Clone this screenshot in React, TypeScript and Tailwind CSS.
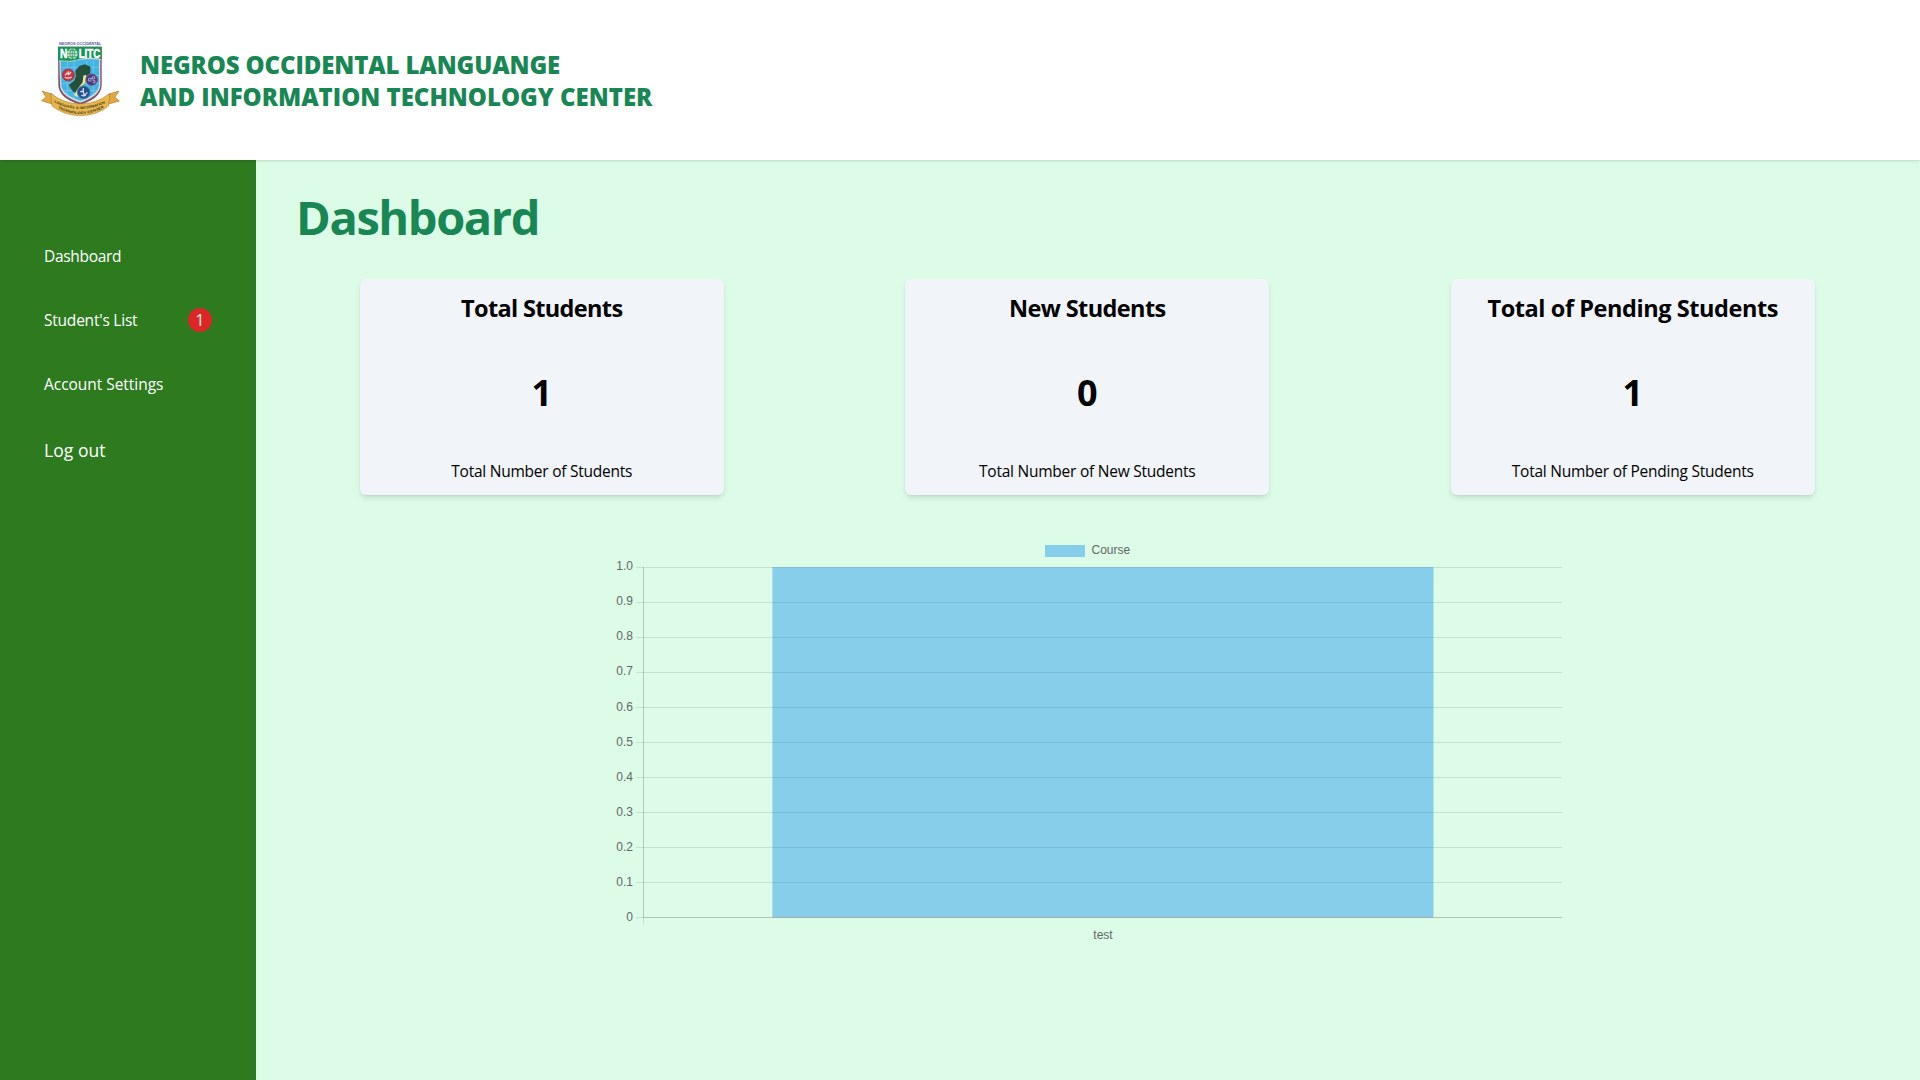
type Stat = { title: string; value: number; caption: string; titleClass: string };

const stats: Stat[] = [
  { title: "Total Students", value: 1, caption: "Total Number of Students", titleClass: "tracking-[-0.65px]" },
  { title: "New Students", value: 0, caption: "Total Number of New Students", titleClass: "tracking-[-0.6px]" },
  { title: "Total of Pending Students", value: 1, caption: "Total Number of Pending Students", titleClass: "tracking-[-0.43px]" },
];

const ticks = ["1.0", "0.9", "0.8", "0.7", "0.6", "0.5", "0.4", "0.3", "0.2", "0.1", "0"];

function Logo() {
  return (
    <svg viewBox="30 30 240 240" className="size-20 shrink-0" fontFamily="Liberation Sans, sans-serif">
      <defs>
        <path id="ribbon-top" d="M72 217 Q151 257 230 217" />
        <path id="ribbon-bottom" d="M80 233 Q151 271 222 233" />
      </defs>
      <text x="87" y="46" fontSize="11" fontWeight="bold" fill="#5b55a5" textLength="127" lengthAdjust="spacingAndGlyphs">
        NEGROS OCCIDENTAL
      </text>
      {/* shield */}
      <path d="M84 50H215V165Q214 205 151 224Q86 205 85 165Z" fill="#81505e" />
      <path d="M88 85H211V164Q211 198 151 218Q90 198 90 164Z" fill="#c9dbe5" />
      <path d="M92 88H207V163Q207 194 151 212Q94 194 94 163Z" fill="#46b4e2" />
      <path d="M112 92V192M132 92V205M170 92V205M190 92V192M94 112H207M94 136H207M94 160H207M98 182H202" stroke="#84d3ee" strokeWidth="1.6" />
      {/* island */}
      <path d="M148 108L165 103L181 110L181 129L170 139L166 158L150 174L144 195L128 184L116 165L132 153L138 139L136 122Z" fill="#25513c" />
      <path d="M160 137L169 134L166 158L151 173L144 202L132 195L143 176L158 157Z" fill="#efe5a0" />
      {/* emblems */}
      <circle cx="115" cy="135" r="18" fill="#c53840" stroke="#8f3b49" strokeWidth="3" />
      <path d="M105 136L111 129L116 134L123 126M104 142Q115 147 125 141M115 124V131" stroke="#f4dedd" strokeWidth="3.5" fill="none" />
      <circle cx="185" cy="149" r="17" fill="#493a7c" stroke="#6b5283" strokeWidth="3" />
      <path d="M176 145H183V153H175ZM187 140H194V147H187ZM188 152H195V158H188M183 147L188 144" stroke="#bfb5da" strokeWidth="2.5" fill="none" />
      <circle cx="161" cy="187" r="19" fill="#254f8d" stroke="#49779c" strokeWidth="3" />
      <path d="M160 174V187M151 186Q160 180 161 190T172 187M154 195Q161 201 168 194" stroke="#cfddeb" strokeWidth="4" fill="none" />
      {/* name band */}
      <path d="M84 50H215V88Q181 80 152 88Q120 98 84 92Z" fill="#199157" />
      <path d="M87 92Q120 98 152 88Q181 80 213 88" fill="none" stroke="#d9efe3" strokeWidth="2" />
      <g fontSize="36" fontWeight="bold" fill="#fff" stroke="#fff" strokeWidth="1.5">
        <text x="90" y="84" textLength="22" lengthAdjust="spacingAndGlyphs">N</text>
        <text x="146" y="84" textLength="65" lengthAdjust="spacingAndGlyphs">LITC</text>
      </g>
      <circle cx="127" cy="71" r="16" fill="#c7e8d5" />
      <path d="M111 71H143M127 55V87M114 62H140M114 80H140M127 55Q112 71 127 87Q142 71 127 55" fill="none" stroke="#218f5a" strokeWidth="2" />
      {/* ribbon */}
      <path d="M65 192L36 183L48 201L35 212L66 222ZM237 192L267 183L255 201L268 213L236 222Z" fill="#dfa93f" stroke="#a77d36" strokeWidth="2" />
      <path d="M62 190L82 205L66 222ZM240 190L220 205L236 222Z" fill="#8d6a32" />
      <path d="M62 190Q104 222 151 222Q199 222 240 190L236 228Q201 257 151 257Q102 257 66 228Z" fill="#e7b64d" stroke="#a77d36" strokeWidth="1.5" />
      <g fontSize="10.5" fontWeight="bold" fill="#43361f">
        <text>
          <textPath href="#ribbon-top" textLength="160" lengthAdjust="spacingAndGlyphs">LANGUAGE &amp; INFORMATION</textPath>
        </text>
        <text>
          <textPath href="#ribbon-bottom" startOffset="4" textLength="144" lengthAdjust="spacingAndGlyphs">TECHNOLOGY CENTER</textPath>
        </text>
      </g>
    </svg>
  );
}

function Header() {
  return (
    <header className="relative z-10 flex h-40 shrink-0 items-center gap-5 bg-white px-10 shadow-sm">
      <Logo />
      <h2 className="pt-px text-[24px] leading-8 font-extrabold tracking-[-0.12px] text-[#198754]">
        NEGROS OCCIDENTAL LANGUANGE
        <br />
        <span className="tracking-[0px]">AND INFORMATION TECHNOLOGY CENTER</span>
      </h2>
    </header>
  );
}

function Sidebar() {
  return (
    <nav className="w-64 shrink-0 bg-[#2d7a1f] pt-16 pr-11 pl-11 text-[15.5px] whitespace-nowrap text-white">
      <a className="flex h-16 items-center pt-[2px] tracking-[-0.3px]">Dashboard</a>
      <a className="flex h-16 items-center justify-between">
        <span className="pt-[2px] tracking-[-0.22px]">Student's List</span>
        <span className="flex size-6 items-center justify-center rounded-full bg-[#dc2626] pt-px">1</span>
      </a>
      <a className="flex h-16 items-center pt-[2px] tracking-[-0.04px]">Account Settings</a>
      <a className="flex h-[68px] items-center text-[17.5px] tracking-[0.05px]">Log out</a>
    </nav>
  );
}

function StatCard({ stat }: { stat: Stat }) {
  return (
    <section className="flex h-[216px] w-[363.6px] flex-col items-center justify-between rounded-md bg-[#f1f4f9] px-3 pt-[13px] pb-3 text-black shadow-md">
      <h3 className={`text-[23.5px] leading-8 font-bold ${stat.titleClass}`}>{stat.title}</h3>
      <p className="pt-[2px] text-[36px] leading-10 font-bold">{stat.value}</p>
      <p className="text-[15.5px] leading-6 tracking-[-0.24px]">{stat.caption}</p>
    </section>
  );
}

function CourseChart() {
  return (
    <svg
      width="952"
      height="420"
      viewBox="612 535 952 420"
      fontFamily="Liberation Sans, Arial, sans-serif"
      fontSize="12"
      fill="#666"
      shapeRendering="crispEdges"
    >
      <rect x="1045" y="545" width="40" height="12" fill="#87ceeb" />
      <text x="1091.5" y="554">Course</text>
      {ticks.map((tick, i) => (
        <g key={tick}>
          <rect x="636" y={567 + i * 35} width="926" height="1" fill="#000" fillOpacity="0.1" />
          <text x="633" y={(i < 4 ? 570 : 571) + i * 35} textAnchor="end">
            {tick}
          </text>
        </g>
      ))}
      <rect x="643" y="567" width="1" height="358" fill="#000" fillOpacity="0.1" />
      <rect x="772.4" y="567" width="661.1" height="350" fill="#87ceeb" shapeRendering="auto" />
      {ticks.map((tick, i) => (
        <rect key={tick} x="772" y={567 + i * 35} width="661" height="1" fill="#000" fillOpacity="0.08" />
      ))}
      <rect x="643" y="567" width="1" height="350" fill="#000" fillOpacity="0.1" />
      <rect x="643" y="917" width="919" height="1" fill="#000" fillOpacity="0.12" />
      <text x="1103" y="939" textAnchor="middle">test</text>
    </svg>
  );
}

export default function App() {
  return (
    <div className="flex h-screen flex-col overflow-hidden bg-[#dcfce7] font-['Open_Sans',sans-serif]">
      <Header />
      <div className="flex min-h-0 flex-1">
        <Sidebar />
        <main className="flex flex-1 flex-col">
          <h1 className="mt-[33px] ml-10 text-[47px] leading-[48px] font-bold tracking-[-1.4px] text-[#198754]">Dashboard</h1>
          <div className="mt-[38px] grid grid-cols-3 justify-items-center pr-[14.5px] pl-[13px]">
            {stats.map((stat) => (
              <StatCard key={stat.title} stat={stat} />
            ))}
          </div>
          <div className="mt-10 ml-[356px]">
            <CourseChart />
          </div>
        </main>
      </div>
    </div>
  );
}
